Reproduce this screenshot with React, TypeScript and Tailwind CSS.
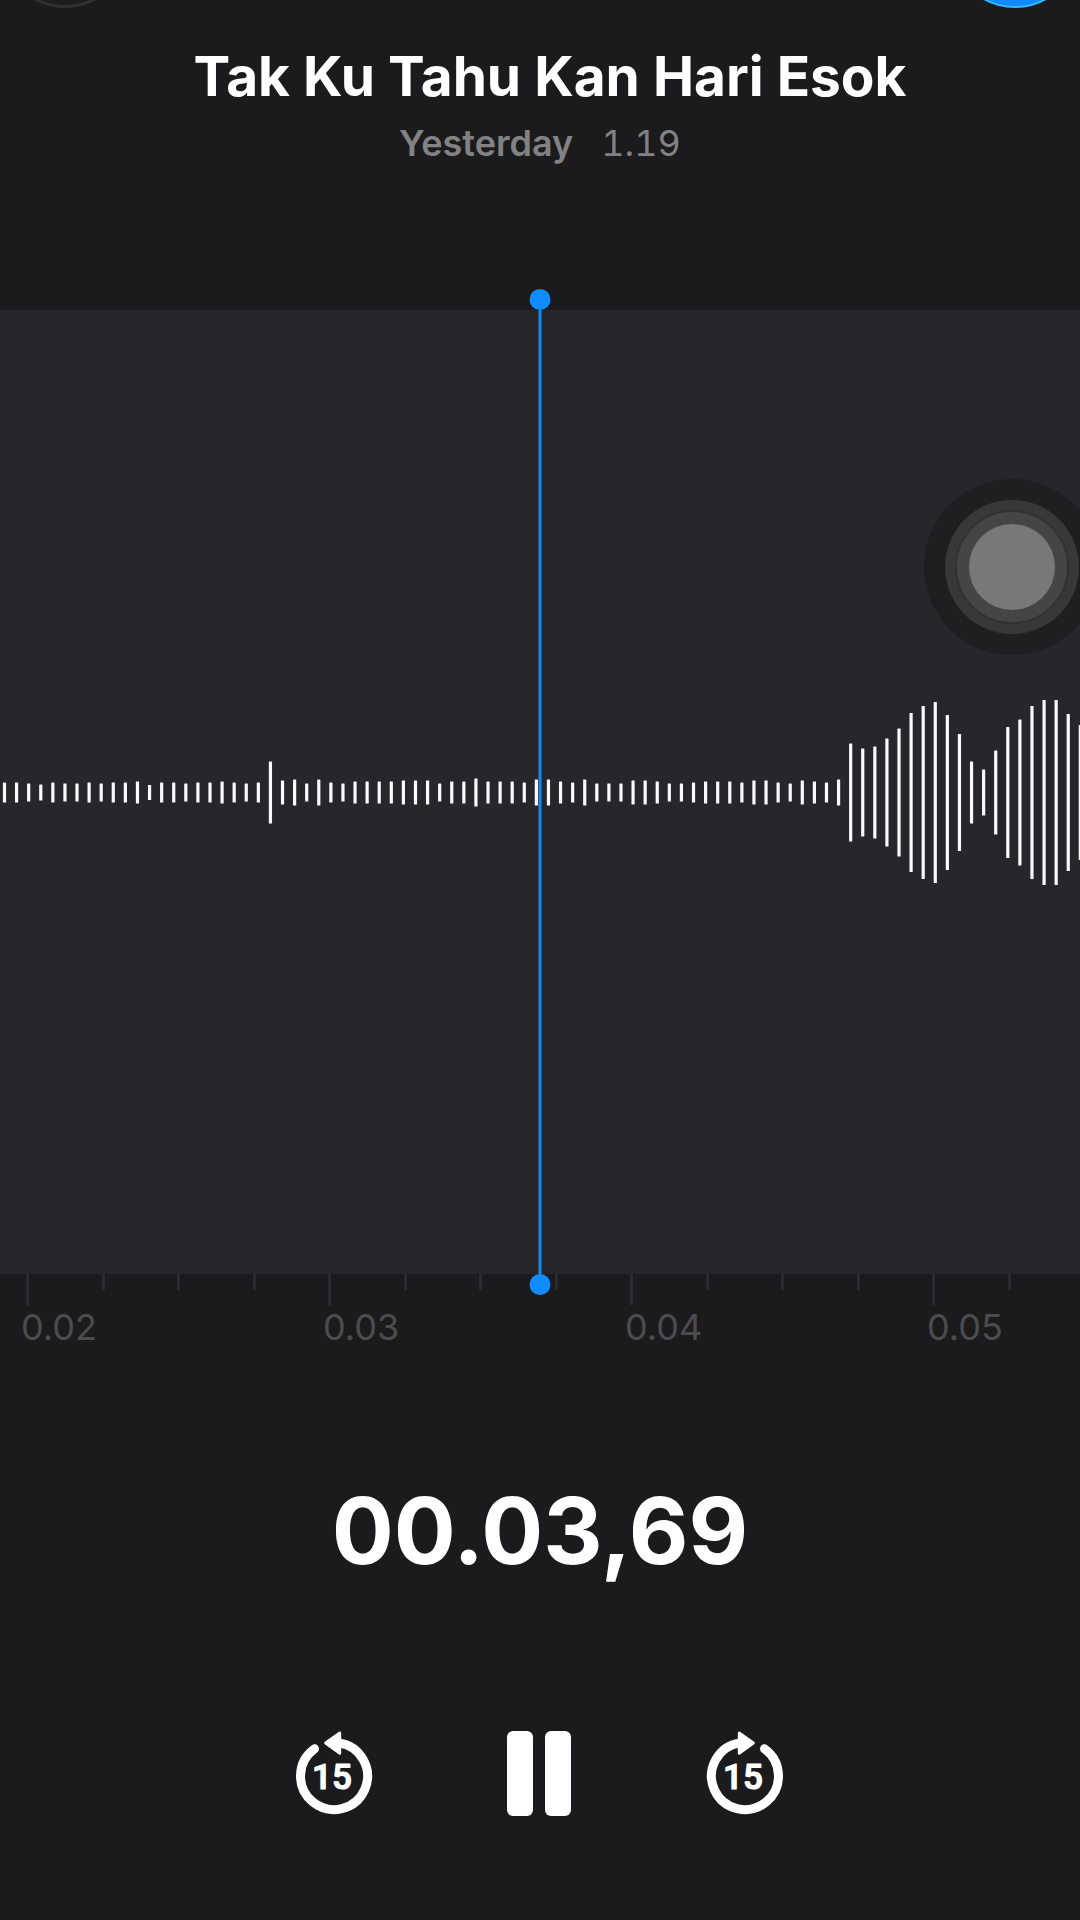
import React, { useState } from 'react';

const BAR_STEP = 12.088;
const WAVE_HEIGHT = 964;

const LEVELS = [
  20, 20, 18, 16, 20, 18, 18, 20, 18, 20, 20, 22, 15, 20, 20, 18, 20, 20, 22, 20,
  18, 20, 62, 24, 26, 18, 26, 20, 18, 22, 22, 22, 22, 24, 24, 24, 18, 22, 22, 28,
  22, 22, 22, 20, 26, 26, 22, 20, 26, 18, 18, 18, 24, 24, 22, 18, 18, 20, 22, 22,
  22, 20, 24, 24, 20, 18, 24, 22, 20, 26, 98, 88, 92, 108, 128, 159, 173, 181, 155, 117,
  62, 46, 84, 131, 146, 173, 185, 185, 157, 135,
];

const SECONDS = ['0.02', '0.03', '0.04', '0.05'];

const Waveform: React.FC = () => (
  <svg className="w-full h-[964px] block" viewBox={`0 0 1080 ${WAVE_HEIGHT}`} preserveAspectRatio="xMidYMid slice" aria-hidden="true">
    {LEVELS.map((level, i) => (
      <rect key={i} x={4.5 + i * BAR_STEP - 1.6} y={(WAVE_HEIGHT - level) / 2 + 0.5} width="3.2" height={level} rx="0.5" fill="#fafafc" />
    ))}
  </svg>
);

const Playhead: React.FC = () => (
  <div className="absolute -top-[21px] -bottom-[21px] left-1/2 -translate-x-1/2 flex flex-col items-center">
    <span className="w-[21px] h-[21px] rounded-full bg-[#118cff]"></span>
    <span className="w-[3px] flex-1 bg-[#158af2]"></span>
    <span className="w-[21px] h-[21px] rounded-full bg-[#118cff]"></span>
  </div>
);

const Ruler: React.FC = () => (
  <div className="flex overflow-hidden pl-[26px]">
    {SECONDS.map((label) => (
      <div key={label} className="w-[302px] shrink-0">
        <div className="grid grid-cols-4 h-[31px]">
          <span className="border-l-3 border-[#2b2b2f] h-[31px]"></span>
          <span className="border-l-3 border-[#2b2b2f] h-4"></span>
          <span className="border-l-3 border-[#2b2b2f] h-4"></span>
          <span className="border-l-3 border-[#2b2b2f] h-4"></span>
        </div>
        <p className="-ml-[5px] text-[36px] leading-[44px] text-[#4c4c4e]">{label}</p>
      </div>
    ))}
  </div>
);

interface SkipIconProps {
  forward?: boolean;
}

const SkipIcon: React.FC<SkipIconProps> = ({ forward }) => (
  <svg className="w-[92px] h-[92px]" viewBox="-46 -48 92 92">
    <g transform={forward ? 'scale(-1 1)' : undefined}>
      <path d="M5 -33.1 A33.5 33.5 0 1 1 -19.5 -27.2" fill="none" stroke="#fff" strokeWidth="9" strokeLinecap="round" />
      <path d="M-8.4 -33 L5.8 -43 V-22.6 Z" fill="#fff" stroke="#fff" strokeWidth="2.8" strokeLinejoin="round" />
    </g>
    <text x="-2" y="13" textAnchor="middle" fill="#fff" stroke="#fff" strokeWidth="1.2" strokeLinejoin="round" fontSize="35" className="font-[Roboto,sans-serif] font-medium">15</text>
  </svg>
);

export default function App() {
  const [playing, setPlaying] = useState(true);

  return (
    <main className="min-h-screen overflow-hidden bg-[#1b1b1d] text-white font-[Inter,sans-serif]">
      <div className="h-2 flex items-end justify-between overflow-hidden px-[1px]">
        <button aria-label="Close" className="w-32 h-32 shrink-0 rounded-full border-3 border-[#303032] bg-[#1d1d1f]"></button>
        <button aria-label="Done" className="w-32 h-32 shrink-0 rounded-full border-2 border-[#35b8ff] bg-[#0f8bff]"></button>
      </div>

      <header className="h-[302px] pt-8 text-center">
        <h1 className="pl-5 text-[55px] leading-[72px] font-bold">Tak Ku Tahu Kan Hari Esok</h1>
        <p className="mt-[9px] flex justify-center gap-7 text-[36px] leading-[44px] text-[#828284]">
          <span className="font-semibold">Yesterday</span>
          <span className="tabular-nums">1.19</span>
        </p>
      </header>

      <section className="relative bg-[#27262b]">
        <Waveform />
        <Playhead />
        <button aria-label="AssistiveTouch" className="absolute top-[169px] -right-5 w-44 h-44 rounded-full bg-[#1f1f22] flex items-center justify-center">
          <span className="w-[134px] h-[134px] rounded-full bg-[#38383a] flex items-center justify-center">
            <span className="w-[114px] h-[114px] rounded-full bg-[#454548] border-2 border-[#323234] flex items-center justify-center">
              <span className="w-[86px] h-[86px] rounded-full bg-[#78787a]"></span>
            </span>
          </span>
        </button>
      </section>

      <Ruler />

      <p className="mt-[132px] text-center text-[92px] leading-[100px] font-bold">00.03,69</p>

      <div className="mt-[147px] pr-0.5 flex items-center justify-center gap-[114px]">
        <button aria-label="Back 15 seconds"><SkipIcon /></button>
        <button aria-label={playing ? 'Pause' : 'Play'} onClick={() => setPlaying(!playing)} className="w-[91px] flex justify-center">
          <svg className="w-16 h-[86px]" viewBox="0 0 64 86" fill="#fff">
            {playing ? (
              <>
                <rect x="0" y="0" width="26" height="85" rx="6" />
                <rect x="38" y="0" width="26" height="85" rx="6" />
              </>
            ) : (
              <path d="M4 4 L62 43 L4 82 Z" />
            )}
          </svg>
        </button>
        <button aria-label="Forward 15 seconds"><SkipIcon forward /></button>
      </div>
    </main>
  );
}
